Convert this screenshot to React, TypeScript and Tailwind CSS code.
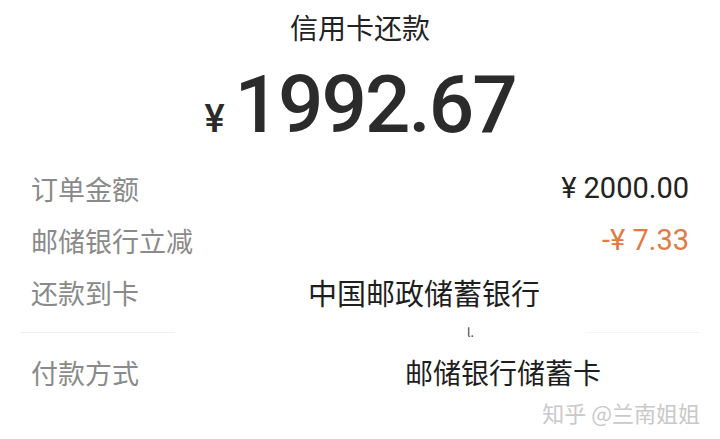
import React from "react";

const cjk = '"Noto Sans CJK SC", "Noto Sans", sans-serif';
const num = '"Roboto", "Noto Sans CJK SC", sans-serif';

function Row({
  label,
  children,
  className = "",
}: {
  label: string;
  children?: React.ReactNode;
  className?: string;
}) {
  return (
    <div className={`flex items-center h-[52px] pl-[31px] pr-[31px] ${className}`}>
      <span className="text-[27px] text-[#8a8a8a] leading-none shrink-0">{label}</span>
      {children}
    </div>
  );
}

export default function App() {
  return (
    <div
      className="relative w-[720px] h-[439px] bg-white overflow-hidden flex flex-col"
      style={{ fontFamily: cjk }}
    >
      <div className="h-[54px] flex items-center justify-center text-[28px] text-[#222] leading-none">
        信用卡还款
      </div>

      <div className="h-[108px] flex items-center justify-center pb-[6px]">
        <div className="flex items-baseline text-[#2b2b2b]" style={{ fontFamily: num }}>
          <span className="text-[38px] font-medium mr-[10px] leading-none">¥</span>
          <span className="text-[80px] font-medium leading-none tracking-[-2px]">1992.67</span>
        </div>
      </div>

      <Row label="订单金额">
        <span className="ml-auto text-[29px] text-[#222] leading-none" style={{ fontFamily: num }}>
          ¥ 2000.00
        </span>
      </Row>
      <Row label="邮储银行立减">
        <span className="ml-auto text-[29px] text-[#e27a43] leading-none" style={{ fontFamily: num }}>
          -¥ 7.33
        </span>
      </Row>
      <Row label="还款到卡">
        <span className="ml-[169px] text-[29px] text-[#1e1e1e] leading-none">中国邮政储蓄银行</span>
      </Row>

      <div className="h-[28px] flex items-center px-[20px]">
        <div className="w-[155px] h-px bg-[#f1f1f1]" />
        <span className="ml-[292px] text-[12px] text-[#444] leading-none">l.</span>
        <div className="ml-auto w-[115px] h-px bg-[#f4f4f4]" />
      </div>

      <Row label="付款方式">
        <span className="ml-[266px] text-[28px] text-[#1e1e1e] leading-none">邮储银行储蓄卡</span>
      </Row>

      <div className="absolute right-[20px] bottom-[16px] text-[22px] text-[#c9c9c9] leading-none">
        知乎 @兰南姐姐
      </div>
    </div>
  );
}
